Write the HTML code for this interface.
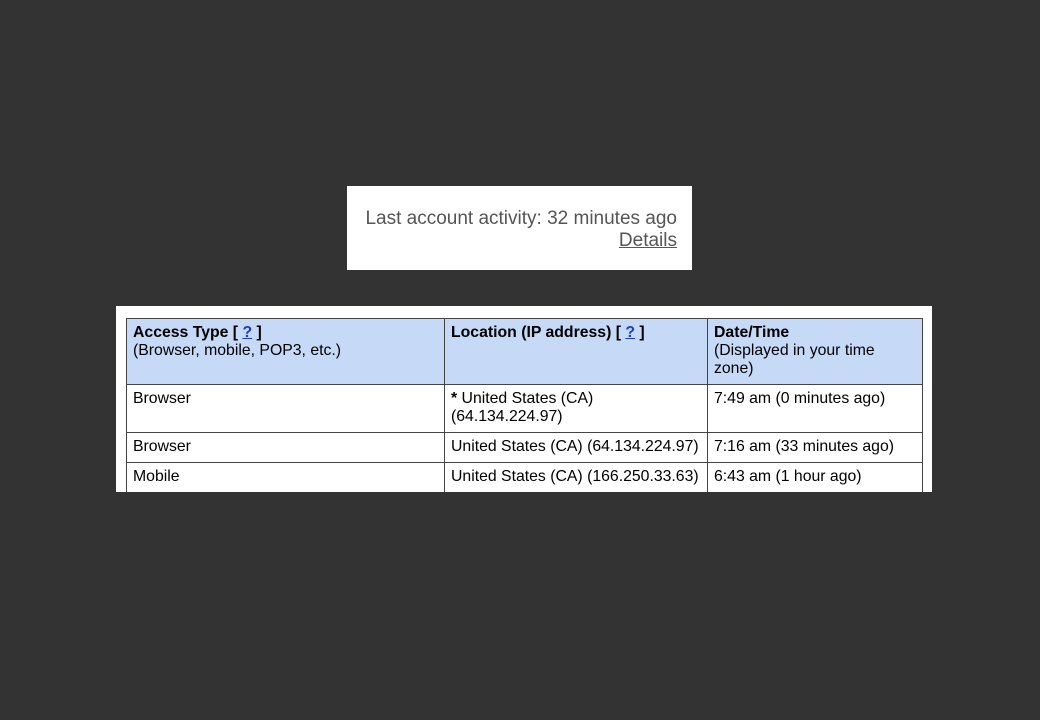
<!DOCTYPE html>
<html><head><style>
body{margin:0;width:1040px;height:720px;background:#333;position:relative;overflow:hidden;font-family:"Liberation Sans",Arial,sans-serif}
.top{position:absolute;left:347px;top:186px;width:345px;height:84px;background:#fff}
.top div{position:absolute;right:15px;color:#555;font-size:19px;text-align:right;white-space:nowrap}
.wrap{position:absolute;left:116px;top:306px;width:816px;height:186px;background:#fff;overflow:hidden}
table{position:absolute;left:10px;top:12px;border-collapse:collapse;font-size:15.8px;color:#000;table-layout:fixed;width:796px}
td{border:1px solid #444;padding:5px 6px 0 6px;vertical-align:top;line-height:18px;white-space:nowrap}
th{background:#c6daf8;border:1px solid #444;padding:5px 6px 0 6px;text-align:left;vertical-align:top;font-weight:normal;line-height:18px;height:60px}
b{font-weight:bold}
a{color:#1a3ccc;text-decoration:underline}
</style></head><body>
<div class="top"><div style="top:22px">Last account activity: 32 minutes ago</div><div style="top:44px;text-decoration:underline">Details</div></div>
<div class="wrap"><table>
<col style="width:318px"><col style="width:263px"><col style="width:215px">
<tr><th><b>Access Type [ <a>?</a> ]</b><br>(Browser, mobile, POP3, etc.)</th><th><b>Location (IP address) [ <a>?</a> ]</b></th><th><b>Date/Time</b><br>(Displayed in your time<br>zone)</th></tr>
<tr><td style="height:42px">Browser</td><td><b>*</b> United States (CA)<br>(64.134.224.97)</td><td>7:49 am (0 minutes ago)</td></tr>
<tr><td style="height:24px">Browser</td><td>United States (CA) (64.134.224.97)</td><td>7:16 am (33 minutes ago)</td></tr>
<tr><td style="height:24px">Mobile</td><td>United States (CA) (166.250.33.63)</td><td>6:43 am (1 hour ago)</td></tr>
</table></div>
</body></html>
